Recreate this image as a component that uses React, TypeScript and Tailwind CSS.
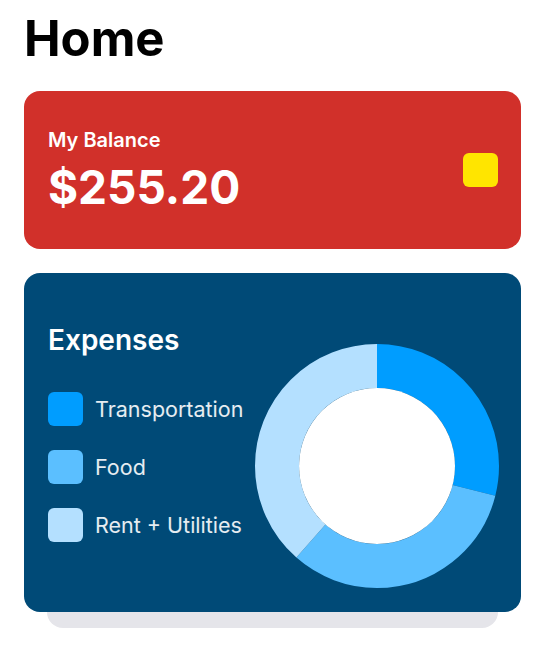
import React from "react";

const expenses = [
  { label: "Transportation", color: "#009dff", from: 0, to: 104 },
  { label: "Food", color: "#5bbfff", from: 104, to: 221 },
  { label: "Rent + Utilities", color: "#b4e0ff", from: 221, to: 360 },
];

const Donut = () => {
  const r = 100;
  const c = 2 * Math.PI * r;
  return (
    <svg width="244" height="244" viewBox="0 0 244 244">
      <g transform="rotate(-90 122 122)">
        {expenses.map((e) => {
          const len = ((e.to - e.from) / 360) * c;
          return (
            <circle
              key={e.label}
              cx="122"
              cy="122"
              r={r}
              fill="none"
              stroke={e.color}
              strokeWidth="44"
              strokeDasharray={`${len} ${c - len}`}
              strokeDashoffset={-(e.from / 360) * c}
            />
          );
        })}
      </g>
      <circle cx="122" cy="122" r="78" fill="#ffffff" />
    </svg>
  );
};

export default function App() {
  return (
    <div className="min-h-screen bg-white pl-6 pr-[27px] pt-[14px] font-['Inter',sans-serif]">
      <h1 className="text-[49px] leading-none font-bold text-black">Home</h1>

      <div className="mt-[28px] flex h-[158px] items-center justify-between rounded-2xl bg-[#d1302a] pl-6 pr-[23px]">
        <div className="text-white">
          <p className="text-xl font-semibold leading-6">My Balance</p>
          <p className="mt-[9px] text-[46px] font-bold leading-[52px]">$255.20</p>
        </div>
        <div className="h-[34px] w-[35px] rounded-md bg-[#ffe500]" />
      </div>

      <div className="relative z-10 mt-6 flex h-[339px] items-end justify-between rounded-2xl bg-[#004a77] pb-6 pl-6 pr-[22px] pt-6">
        <div className="self-start pt-[27px]">
          <h2 className="text-[28px] font-semibold leading-8 text-white">Expenses</h2>
          <ul className="mt-[36px] flex flex-col gap-[24px]">
            {expenses.map((e) => (
              <li key={e.label} className="flex items-center gap-3">
                <span className="h-[34px] w-[35px] rounded-md" style={{ backgroundColor: e.color }} />
                <span className="text-[21.5px] leading-7 text-white/90">{e.label}</span>
              </li>
            ))}
          </ul>
        </div>
        <Donut />
      </div>
      <div className="mx-[23px] -mt-4 h-8 rounded-b-2xl bg-[#e5e5ea]" />
    </div>
  );
}
